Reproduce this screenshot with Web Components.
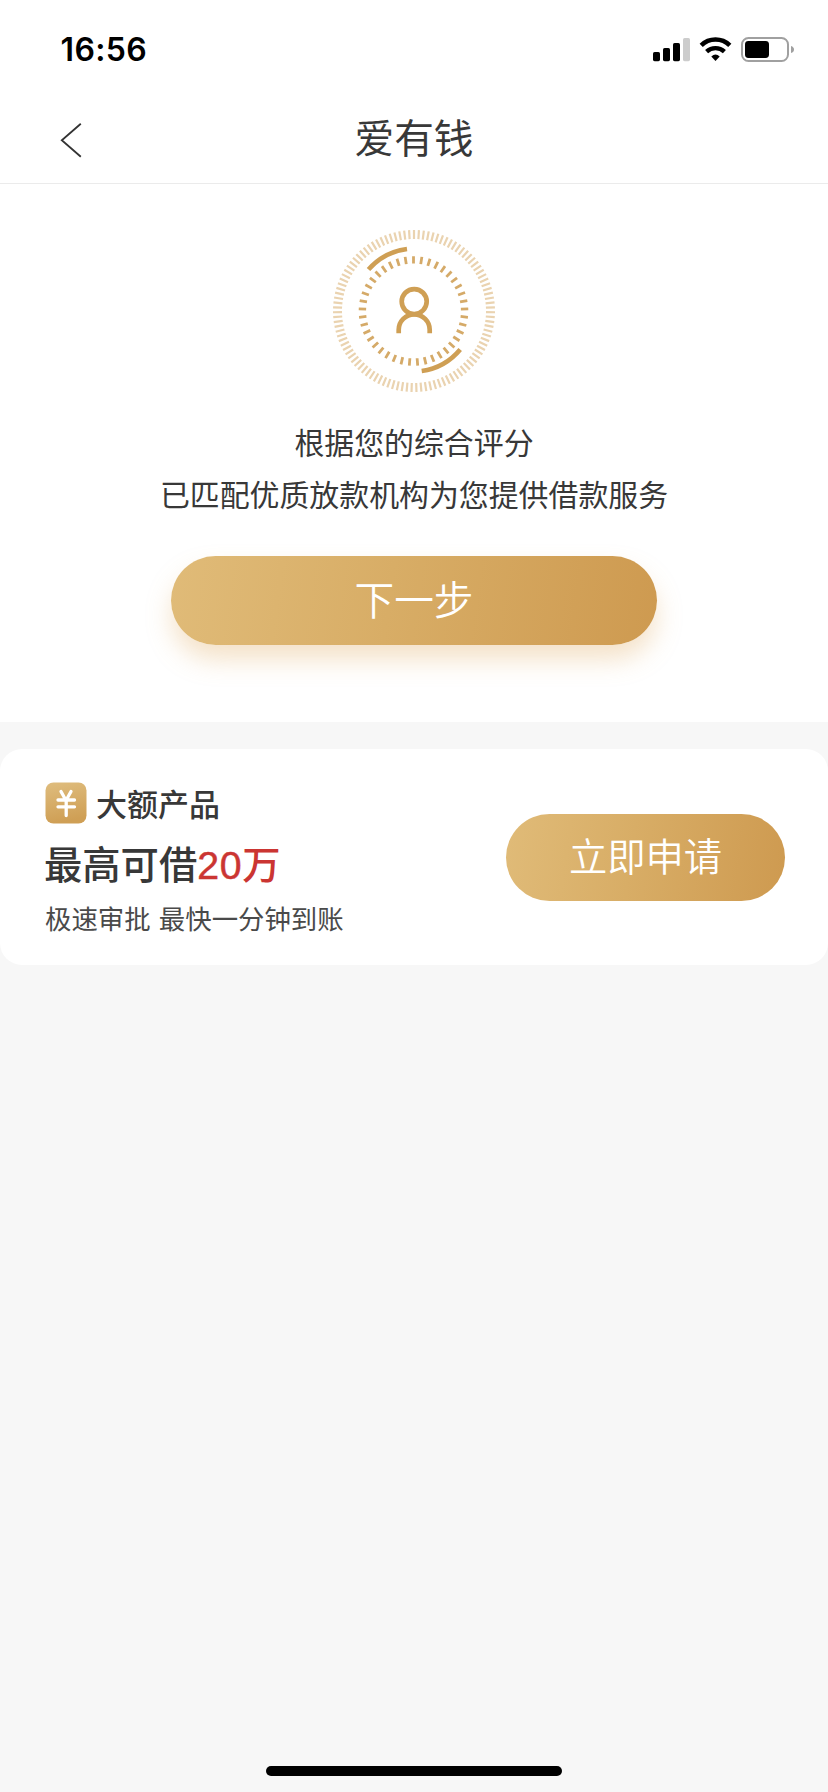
<!DOCTYPE html>
<html lang="zh-CN">
<head>
<meta charset="utf-8">
<title>爱有钱</title>
<style>
html,body{margin:0;height:100%}
body{background:#f7f7f7;font-family:"Noto Sans CJK SC","Noto Sans",sans-serif;color:#383838}
</style>
</head>
<body>
<loan-app></loan-app>
<script>
const define = (name, html, setup) => customElements.define(name, class extends HTMLElement {
  connectedCallback() {
    if (this.shadowRoot) return;
    const t = document.createElement('template');
    t.innerHTML = html;
    const root = this.attachShadow({mode: 'open'});
    root.append(t.content.cloneNode(true));
    if (setup) setup(root, this);
  }
});

define('status-bar', `
<style>
:host{display:flex;box-sizing:border-box;height:96px;padding:0 34px 0 60.500px;justify-content:space-between;align-items:flex-start}
time{font:600 32px/40px Inter,sans-serif;color:#000;margin-top:30px;letter-spacing:.35px}
svg{display:block;margin-top:34px}
</style>
<time>16:56</time>
<svg width="142" height="30" viewBox="652 34 142 30">
<rect x="653" y="52" width="7" height="9.2" rx="1.6"/><rect x="663" y="48" width="7" height="13.2" rx="1.6"/><rect x="673" y="43" width="7" height="18.2" rx="1.6"/><rect x="683" y="38" width="7" height="23.2" rx="1.6" fill="#ccc"/>
<path d="M701.2 45.3A20.6 20.6 0 0 1 729.8 45.3" fill="none" stroke="#000" stroke-width="4.6"/>
<path d="M706.6 51.6A13 13 0 0 1 724.4 51.6" fill="none" stroke="#000" stroke-width="4.4"/>
<path d="M711.3 56.4Q715.5 52.7 719.7 56.4L715.5 61Z"/>
<rect x="742" y="38" width="46" height="23" rx="6.5" fill="none" stroke="#a0a0a0" stroke-width="2"/>
<rect x="745" y="41" width="24" height="17" rx="3.4"/>
<path d="M791 46Q794 47 794 49.5T791 53Z" fill="#a0a0a0"/>
</svg>`);

define('nav-bar', `
<style>
:host{display:grid;grid-template-columns:100px 1fr 100px;box-sizing:border-box;height:88px;border-bottom:1px solid #ebebeb;align-items:center}
svg{display:block;margin-left:60px}
h1{margin:0 0 8px;font-size:39.7px;font-weight:400;line-height:60px;text-align:center}
</style>
<svg width="24" height="38" viewBox="0 0 24 38"><path d="M20.8 2.7L1.8 19.2l19 16.5" fill="none" stroke="#333" stroke-width="1.8"/></svg>
<h1><slot></slot></h1>`);

define('score-emblem', `
<style>:host{display:block;width:166px;height:166px}svg{display:block}</style>
<svg width="166" height="166" viewBox="-83 -83 166 166" fill="none" stroke="#cf9f54">
<g id="outer" stroke-width="2.2" stroke="#ead3b0"></g>
<g id="inner" stroke-width="2.8" stroke="#d5aa68"></g>
<path d="M-45.500-41.500A62 62 0 0 1-7-62" stroke-width="4.6"/>
<path d="M7.700 60A61 61 0 0 0 46.200 38.500" stroke-width="4.6"/>
<circle cx=".2" cy="-9.400" r="12.500" stroke-width="4.700"/>
<path d="M-15.300 22.300V18.800A15.500 15.500 0 0 1 15.700 18.800V22.300" stroke-width="4.700"/>
</svg>`, root => {
  const ticks = (id, n, r0, r1, cx) => {
    let d = '';
    for (let i = 0; i < n; i++) {
      const a = i * 2 * Math.PI / n, s = Math.sin(a), c = -Math.cos(a);
      d += `M${(cx + s*r0).toFixed(2)} ${(c*r0).toFixed(2)}L${(cx + s*r1).toFixed(2)} ${(c*r1).toFixed(2)}`;
    }
    root.getElementById(id).innerHTML = `<path d="${d}"/>`;
  };
  ticks('outer', 103, 72, 81, 0);
  ticks('inner', 41, 47.4, 54.8, -.5);
});

define('gold-button', `
<style>
:host{display:block}
button{display:block;width:100%;height:100%;padding:0 0 var(--lift,2px);border:0;border-radius:50px;background:linear-gradient(98deg,#e0bb78,#d8ad66 45%,#ce9a50);box-shadow:var(--glow,none);color:#fff;font:350 var(--size,40px)/1 "Noto Sans CJK SC",sans-serif}
</style>
<button><slot></slot></button>`);

define('match-panel', `
<style>
:host{display:flex;flex-direction:column;align-items:center;box-sizing:border-box;height:538px;padding-top:44px;background:#fff}
p{margin:21px 0 0;font-size:29.9px;line-height:52px;text-align:center}
gold-button{width:486px;height:89px;margin-top:37px;--glow:0 15px 26px -1px rgba(222,168,90,.34);--size:39.7px;--lift:6px}
</style>
<score-emblem></score-emblem>
<p>根据您的综合评分<br>已匹配优质放款机构为您提供借款服务</p>
<gold-button>下一步</gold-button>`);

define('product-card', `
<style>
:host{display:flex;box-sizing:border-box;height:216px;margin-top:27px;padding:0 43px 0 45px;border-radius:22px;background:#fff;justify-content:space-between;align-items:center}
.info{display:flex;flex-direction:column;padding-top:4px}
.head{display:flex;align-items:center;gap:9px;height:42px;font-size:31px;font-weight:500;line-height:42px}
svg{display:block}
.amount{font-size:38.3px;font-weight:500;line-height:50px;margin:14px 0 0 -1px}
em{font-style:normal;color:#cb3532}
b{font:400 39.300px/1 "Liberation Sans",sans-serif;letter-spacing:.6px;-webkit-text-stroke:.5px #cb3532}
.note{font-size:26.4px;line-height:36px;margin-top:12px;color:#4a4a4a;word-spacing:2.4px}
gold-button{width:279px;height:87px;--size:38.3px;--lift:4px}
</style>
<div class="info">
<div class="head"><svg width="42" height="42" viewBox="0 0 42 42"><defs><linearGradient id="g" x1="0" y1="0" x2=".2" y2="1"><stop stop-color="#dfbd7e"/><stop offset="1" stop-color="#cf9f55"/></linearGradient></defs><rect x=".5" y=".5" width="41" height="41" rx="8" fill="url(#g)"/><path d="M16 9.500l5 9 5-9M13 18h16.500M13 24.800h16.500M21.200 18v15.500" fill="none" stroke="#fff" stroke-width="3.300" stroke-linecap="round" stroke-linejoin="round"/></svg><span>大额产品</span></div>
<div class="amount">最高可借<em><b>20</b>万</em></div>
<div class="note">极速审批 最快一分钟到账</div>
</div>
<gold-button>立即申请</gold-button>`);

define('home-indicator', `
<style>:host{display:block;width:296px;height:10px;margin:auto auto 16px;border-radius:5px;background:#000}</style>`);

define('loan-app', `
<style>
:host{display:flex;flex-direction:column;height:1792px;overflow:hidden}
header{background:#fff}
</style>
<header><status-bar></status-bar><nav-bar>爱有钱</nav-bar></header>
<match-panel></match-panel>
<product-card></product-card>
<home-indicator></home-indicator>`);
</script>
</body>
</html>
